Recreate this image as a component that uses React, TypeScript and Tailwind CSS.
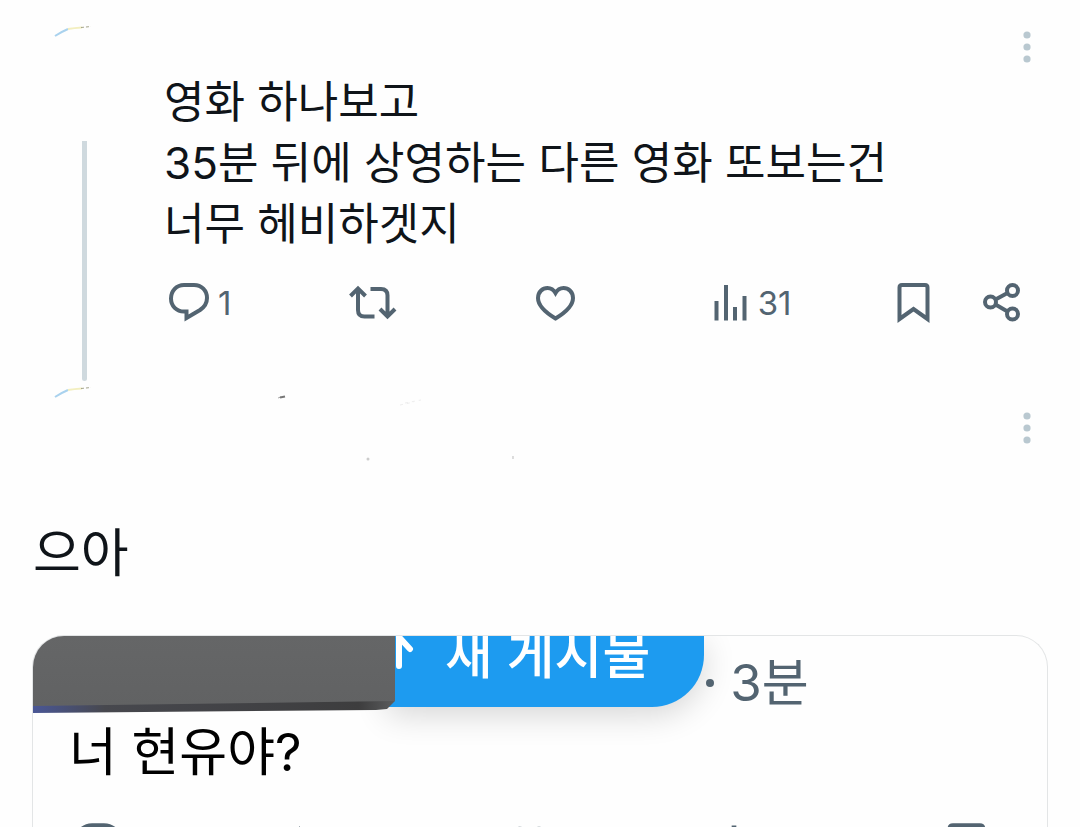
import type { ReactNode } from 'react';

interface ActionProps {
  label: string;
  count?: string;
  children: ReactNode;
}

function Action({ label, count, children }: ActionProps) {
  return (
    <button aria-label={label} className="flex items-center justify-start gap-2 text-[33px] leading-10 text-[#536471]">
      {children}
      {count && <span>{count}</span>}
    </button>
  );
}

function ReplyIcon({ className = 'w-[42px]' }: { className?: string }) {
  return (
    <svg className={`${className} shrink-0`} viewBox="0 0 42 42" fill="none" stroke="currentColor" strokeWidth="4">
      <path d="M16 3H26C33.500 3 39 8.500 39 16C39 21.500 36.500 25 32 28L18.500 36V29.500H16C8.500 29.500 3 24 3 16.500C3 9 8.500 3 16 3Z" />
    </svg>
  );
}

function RepostIcon({ className = 'w-12' }: { className?: string }) {
  return (
    <svg className={`${className} shrink-0`} viewBox="0 0 48 42" fill="none" stroke="currentColor" strokeWidth="4">
      <path d="M1.500 14L9 6.500L16.500 14M9 7.500V28Q9 34.500 15.500 34.500H25.500" />
      <path d="M21.500 7H32Q38.500 7 38.500 13.500V34.500M31 27L38.500 34.500L46 27" />
    </svg>
  );
}

function LikeIcon({ className = 'w-10' }: { className?: string }) {
  return (
    <svg className={`${className} shrink-0`} viewBox="0 0 40 42" fill="none" stroke="currentColor" strokeWidth="4">
      <path d="M19.500 11C17.500 7.500 14.500 6 11.500 6C6.500 6 2 10 2 16C2 24 9.500 30.500 19.500 36.500C29.500 30.500 37 24 37 16C37 10 32.500 6 27.500 6C24.500 6 21.500 7.500 19.500 11Z" />
    </svg>
  );
}

function ViewsIcon({ className = 'w-9' }: { className?: string }) {
  return (
    <svg className={`${className} shrink-0`} viewBox="0 0 36 42" fill="none" stroke="currentColor" strokeWidth="4">
      <path d="M2.500 19V38.500M12 3V38.500M21 25V38.500M30.500 14V38.500" />
    </svg>
  );
}

function BookmarkIcon({ className = 'w-[34px]' }: { className?: string }) {
  return (
    <svg className={`${className} shrink-0`} viewBox="0 0 34 42" fill="none" stroke="currentColor" strokeWidth="4">
      <path d="M2.500 37V5.500Q2.500 3 5 3H28Q30.500 3 30.500 5.500V37L16.500 27Z" />
    </svg>
  );
}

function ShareIcon() {
  return (
    <svg width="38" height="42" viewBox="0 0 38 42" fill="none" stroke="currentColor" strokeWidth="4">
      <circle cx="7.500" cy="20" r="5.500" />
      <circle cx="29.500" cy="8.500" r="5.500" />
      <circle cx="29.500" cy="32" r="5.500" />
      <path d="M12.500 17.500L24.500 11M12.500 22.500L24.500 29.500" />
    </svg>
  );
}

function MoreButton() {
  return (
    <button aria-label="더 보기" className="text-[#b9c8d0]">
      <svg width="8" height="34" viewBox="0 0 8 34" fill="currentColor">
        <circle cx="4" cy="5" r="3.600" />
        <circle cx="4" cy="17" r="3.600" />
        <circle cx="4" cy="29" r="3.600" />
      </svg>
    </button>
  );
}

function AvatarEdge() {
  return (
    <svg width="40" height="16" viewBox="0 0 40 16" fill="none" className="ml-[52px]">
      <path d="M3 12Q9 8 16 5" stroke="#a9d2ee" strokeWidth="2" />
      <path d="M16 5Q22 4 30 3.500" stroke="#f3efc0" strokeWidth="2" />
      <path d="M29 3.500L39 2.500" stroke="#a5a58c" strokeWidth="1" strokeDasharray="3 2" />
    </svg>
  );
}

function FirstPost() {
  return (
    <article className="flex shrink-0">
      <div className="flex w-[164px] shrink-0 flex-col pt-6">
        <AvatarEdge />
        <div className="ml-[82px] mt-[101px] w-[5px] flex-1 rounded-b-sm bg-[#cfd9de]" />
      </div>
      <div className="min-w-0 flex-1 pb-14">
        <header className="flex h-[72px] items-start justify-end pr-[49px] pt-[30px]">
          <MoreButton />
        </header>
        <p className="text-[44px] leading-[61px]">
          영화 하나보고
          <br />
          35분 뒤에 상영하는 다른 영화 또보는건
          <br />
          너무 헤비하겟지
        </p>
        <div className="mt-[26px] grid h-11 grid-cols-[181fr_186fr_178fr_183fr_86px_38px] items-center pl-1 pr-[59px]">
          <Action label="답글" count="1"><ReplyIcon /></Action>
          <Action label="재게시"><RepostIcon /></Action>
          <Action label="마음에 들어요"><LikeIcon /></Action>
          <Action label="조회수" count="31"><ViewsIcon /></Action>
          <Action label="북마크"><BookmarkIcon /></Action>
          <Action label="공유"><ShareIcon /></Action>
        </div>
      </div>
    </article>
  );
}

function QuotedCard() {
  return (
    <section className="mx-8 mt-11 flex-1 overflow-hidden rounded-t-[32px] border border-b-0 border-[#e3e5e6]">
      <div className="flex h-20 items-start">
        {/* Cover over the author name */}
        <svg width="363" height="78" viewBox="0 0 363 78" className="z-10 -ml-px shrink-0">
          <defs>
            <linearGradient id="cover" x1="0" y1="0" x2="0" y2="1">
              <stop offset="0" stopColor="#656667" />
              <stop offset="1" stopColor="#616263" />
            </linearGradient>
            <linearGradient id="under" x1="0" y1="0" x2="1" y2="0">
              <stop offset="0" stopColor="#4a5797" />
              <stop offset="0.200" stopColor="#47484e" />
              <stop offset="0.900" stopColor="#3d3d3e" />
              <stop offset="1" stopColor="#5b5c5d" />
            </linearGradient>
          </defs>
          <path d="M0 60H363V65L355 73L344 74L0 77Z" fill="url(#under)" />
          <path d="M0 0H363V65L0 70Z" fill="url(#cover)" />
        </svg>
        <button className="-ml-2 flex h-[71px] items-center rounded-br-[52px] bg-[#1d9bf0] pb-8 pl-2 pr-[54px] text-[52px] font-medium text-white shadow-[0_8px_32px_rgba(0,0,0,0.16)]">
          <svg width="50" height="39" viewBox="0 0 50 39" fill="none" stroke="currentColor" strokeWidth="6" strokeLinecap="round" strokeLinejoin="round" className="shrink-0">
            <path d="M4 0V30M4 1L15 13" />
          </svg>
          <span className="whitespace-nowrap leading-10">새 게시물</span>
        </button>
        <span className="flex items-center gap-4 whitespace-nowrap pl-0.5 pt-4 text-[51px] leading-[62px] text-[#536471]">
          <span className="size-2 rounded-full bg-current" />
          3분
        </span>
      </div>
      <p className="pl-9 text-[52px] leading-[74px] text-black">너 현유야?</p>
      <div className="mt-8 grid grid-cols-[216fr_216fr_214fr_226fr_100px] items-start pl-10 text-[#536471]">
        <Action label="답글"><ReplyIcon className="w-[50px]" /></Action>
        <Action label="재게시"><RepostIcon className="w-14" /></Action>
        <Action label="마음에 들어요"><LikeIcon className="w-12" /></Action>
        <Action label="조회수"><ViewsIcon className="w-[42px]" /></Action>
        <Action label="북마크"><BookmarkIcon className="w-10" /></Action>
      </div>
    </section>
  );
}

export default function App() {
  return (
    <main className="flex h-screen flex-col overflow-hidden bg-[#fefefe] font-['Inter','Noto_Sans_CJK_KR',sans-serif] text-[#0f1419]">
      <FirstPost />
      <article className="flex min-h-0 flex-1 flex-col">
        <header className="flex h-[136px] shrink-0 items-start justify-between pr-[49px]">
          <div className="flex pt-1">
            <AvatarEdge />
            <svg width="440" height="84" viewBox="0 0 440 84" fill="none">
              <path d="M186 13L189 12" stroke="#aaa" strokeWidth="1" />
              <path d="M188 12.500L193 11.500" stroke="#777" strokeWidth="2" />
              <path d="M308 20L322 17M313 18L329 15" stroke="#eeeeee" strokeDasharray="3 4" />
              <circle cx="276" cy="74" r="1.500" fill="#ccc" />
              <path d="M421 71V74" stroke="#bbb" />
            </svg>
          </div>
          <div className="pt-[30px]">
            <MoreButton />
          </div>
        </header>
        <p className="shrink-0 pl-[33px] text-[52px] leading-[74px]">으아</p>
        <QuotedCard />
      </article>
    </main>
  );
}
